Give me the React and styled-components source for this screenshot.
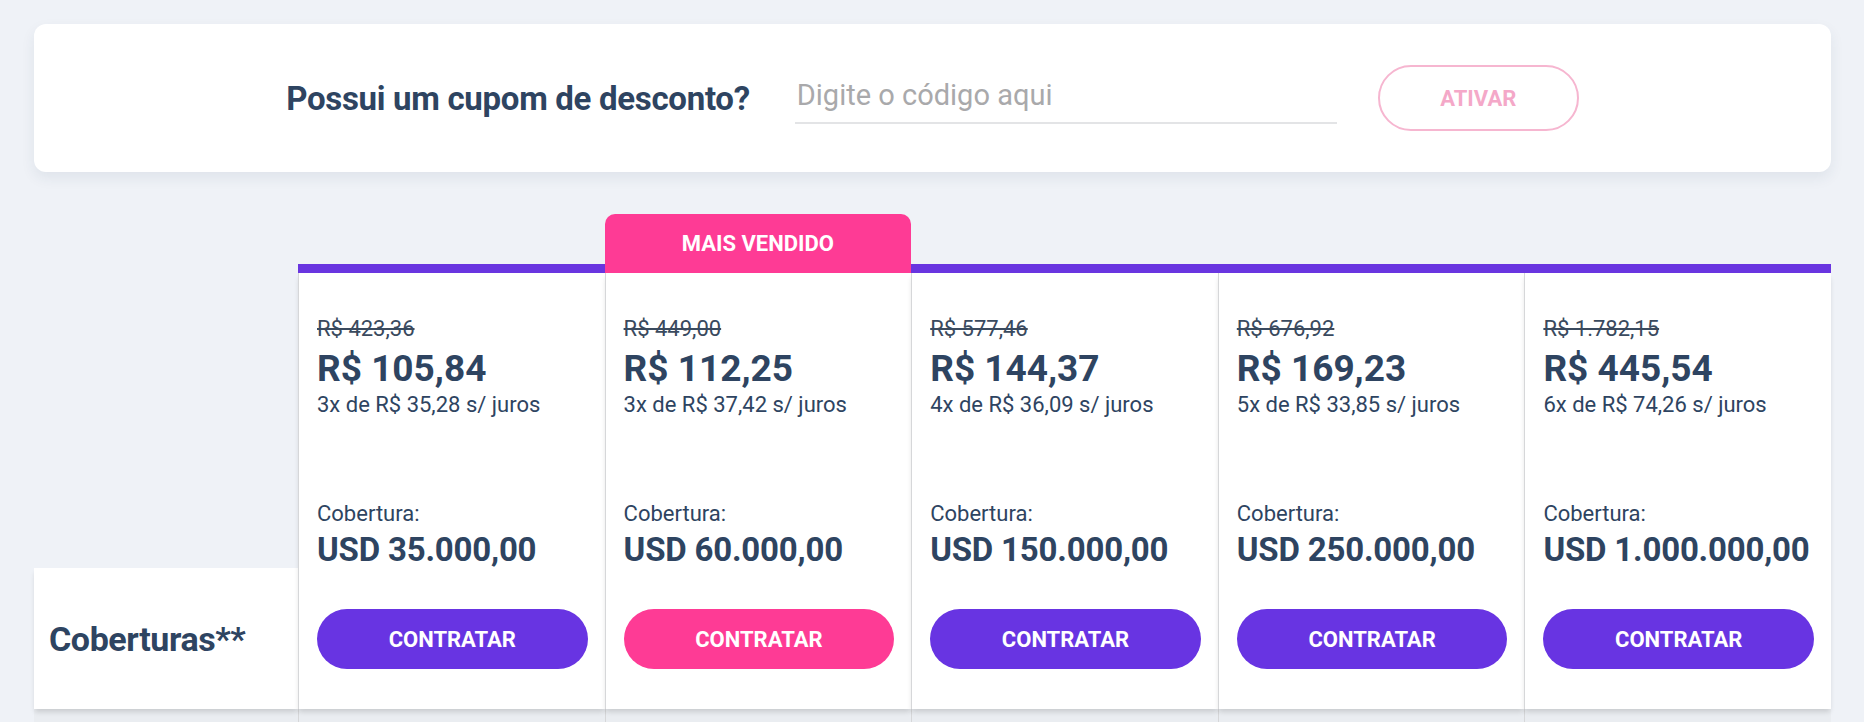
import React from 'react'
import styled, {createGlobalStyle} from 'styled-components'

const GlobalStyle = createGlobalStyle`
  * { box-sizing: border-box; }
  body {
    margin: 0;
    background: #eff2f7;
    font-family: Roboto, 'Liberation Sans', sans-serif;
    color: #2e4461;
  }
`

const Page = styled.div`
  padding: 24px 33px 0 34px;
`

const CouponCard = styled.div`
  height: 148px;
  background: #fff;
  border-radius: 12px;
  box-shadow: 0 6px 14px rgba(40, 60, 90, 0.08);
  display: flex;
  align-items: center;
  justify-content: center;
`

const CouponLabel = styled.span`
  font-size: 33px;
  font-weight: 700;
  letter-spacing: -0.3px;
  margin-right: 45px;
`

const CouponInput = styled.input`
  width: 542px;
  height: 50px;
  margin-top: 2px;
  border: none;
  border-bottom: 2px solid #e3e4e6;
  outline: none;
  background: transparent;
  font-family: inherit;
  font-size: 29px;
  color: #2e4461;
  padding: 0 2px 6px;
  margin-right: 41px;
  &::placeholder { color: #a9a9ab; }
`

const OutlineButton = styled.button`
  width: 201px;
  height: 66px;
  border-radius: 33px;
  border: 2.5px solid #f6b6d0;
  background: #fff;
  color: #f4a8c8;
  font-family: inherit;
  font-size: 22px;
  font-weight: 700;
`

const Table = styled.div`
  margin-top: 42px;
  display: grid;
  grid-template-columns: 264px repeat(5, 1fr);
`

const LabelCell = styled.div`
  align-self: end;
  height: 141px;
  background: #fff;
  display: flex;
  align-items: center;
  padding-left: 15px;
  font-size: 34px;
  font-weight: 700;
  letter-spacing: -0.4px;
  box-shadow: 0 4px 5px -1px rgba(0, 0, 0, 0.14);
  position: relative;
`

const Plan = styled.div`
  display: flex;
  flex-direction: column;
`

const PlanTop = styled.div`
  height: 59px;
  display: flex;
  align-items: center;
  justify-content: center;
  color: #fff;
  font-size: 22px;
  font-weight: 700;
  background: ${p => p.$highlight
    ? '#fe3b95'
    : 'linear-gradient(to bottom, transparent 50px, #6935e0 50px)'};
  border-radius: ${p => p.$highlight ? '10px 10px 0 0' : '0'};
`

const PlanBody = styled.div`
  background: #fff;
  border-left: 1px solid #d6d7d9;
  padding: 43px 17px 40px 18px;
  display: flex;
  flex-direction: column;
  box-shadow: 0 4px 5px -1px rgba(0, 0, 0, 0.14);
  position: relative;
`

const OldPrice = styled.div`
  font-size: 22px;
  line-height: 26px;
  text-decoration: line-through;
  color: #3a4a5e;
`

const Price = styled.div`
  font-size: 37px;
  line-height: 44px;
  font-weight: 700;
  margin-top: 5px;
  margin-bottom: 1px;
`

const Installments = styled.div`
  font-size: 22px;
  line-height: 26px;
`

const CoverLabel = styled.div`
  margin-top: 83px;
  font-size: 22px;
  line-height: 26px;
`

const CoverValue = styled.div`
  margin-top: 4px;
  font-size: 33px;
  line-height: 38px;
  font-weight: 700;
  letter-spacing: -0.2px;
`

const BuyButton = styled.button`
  margin-top: 40px;
  width: 100%;
  height: 60px;
  border: none;
  border-radius: 30px;
  background: ${p => p.$highlight ? '#fe3b95' : '#6834e2'};
  color: #fff;
  font-family: inherit;
  font-size: 22px;
  font-weight: 700;
`

const NextRow = styled.div`
  height: 14px;
  background: #eaedf1;
  border-left: ${p => p.$first ? 'none' : '1px solid #d6d7d9'};
`

const plans = [
  {old: 'R$ 423,36', price: 'R$ 105,84', inst: '3x de R$ 35,28 s/ juros', cover: 'USD 35.000,00'},
  {old: 'R$ 449,00', price: 'R$ 112,25', inst: '3x de R$ 37,42 s/ juros', cover: 'USD 60.000,00', best: true},
  {old: 'R$ 577,46', price: 'R$ 144,37', inst: '4x de R$ 36,09 s/ juros', cover: 'USD 150.000,00'},
  {old: 'R$ 676,92', price: 'R$ 169,23', inst: '5x de R$ 33,85 s/ juros', cover: 'USD 250.000,00'},
  {old: 'R$ 1.782,15', price: 'R$ 445,54', inst: '6x de R$ 74,26 s/ juros', cover: 'USD 1.000.000,00'}
]

const App = () => {
  return (
    <>
      <GlobalStyle/>
      <Page>
        <CouponCard>
          <CouponLabel>Possui um cupom de desconto?</CouponLabel>
          <CouponInput placeholder="Digite o código aqui"/>
          <OutlineButton>ATIVAR</OutlineButton>
        </CouponCard>

        <Table>
          <LabelCell>Coberturas**</LabelCell>
          {plans.map(plan => (
            <Plan key={plan.price}>
              <PlanTop $highlight={plan.best}>{plan.best && 'MAIS VENDIDO'}</PlanTop>
              <PlanBody>
                <OldPrice>{plan.old}</OldPrice>
                <Price>{plan.price}</Price>
                <Installments>{plan.inst}</Installments>
                <CoverLabel>Cobertura:</CoverLabel>
                <CoverValue>{plan.cover}</CoverValue>
                <BuyButton $highlight={plan.best}>CONTRATAR</BuyButton>
              </PlanBody>
            </Plan>
          ))}
          <NextRow $first/>
          {plans.map(plan => <NextRow key={plan.price}/>)}
        </Table>
      </Page>
    </>
  )
}

export default App
